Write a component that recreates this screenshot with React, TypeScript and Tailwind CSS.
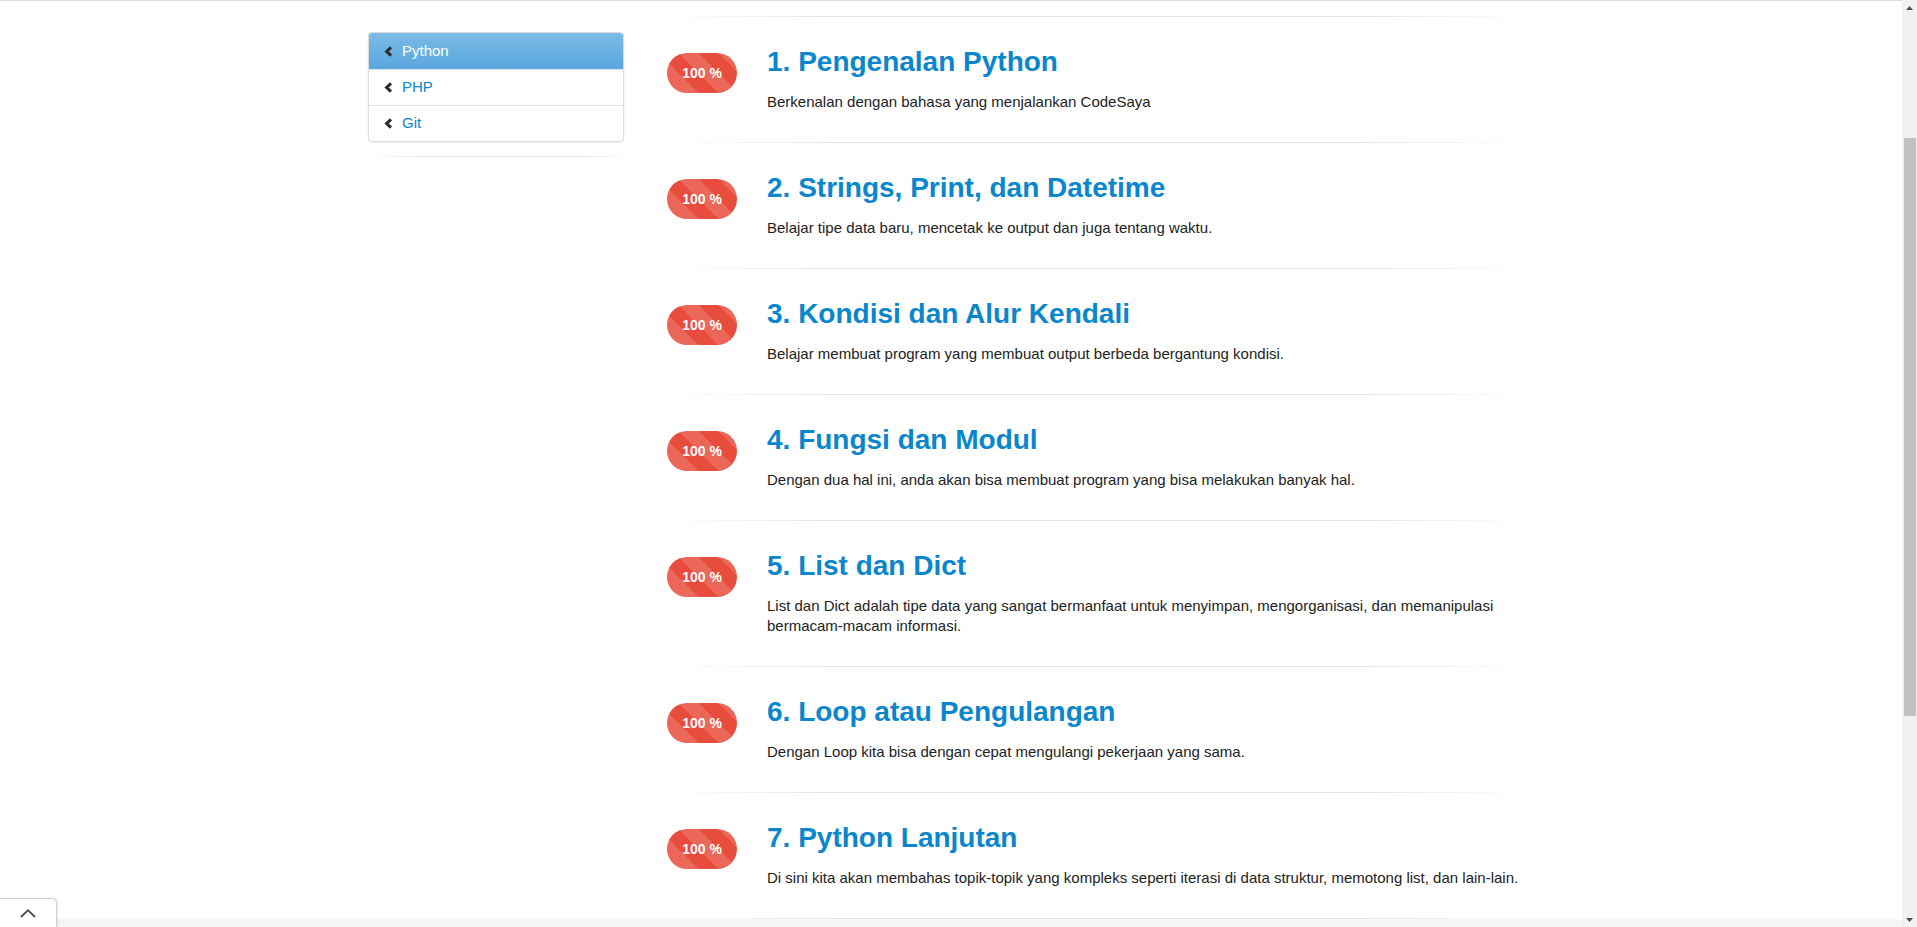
import React from "react";

const lessons = [
  { title: "1. Pengenalan Python", desc: "Berkenalan dengan bahasa yang menjalankan CodeSaya" },
  { title: "2. Strings, Print, dan Datetime", desc: "Belajar tipe data baru, mencetak ke output dan juga tentang waktu." },
  { title: "3. Kondisi dan Alur Kendali", desc: "Belajar membuat program yang membuat output berbeda bergantung kondisi." },
  { title: "4. Fungsi dan Modul", desc: "Dengan dua hal ini, anda akan bisa membuat program yang bisa melakukan banyak hal." },
  {
    title: "5. List dan Dict",
    desc: "List dan Dict adalah tipe data yang sangat bermanfaat untuk menyimpan, mengorganisasi, dan memanipulasi bermacam-macam informasi.",
  },
  { title: "6. Loop atau Pengulangan", desc: "Dengan Loop kita bisa dengan cepat mengulangi pekerjaan yang sama." },
  {
    title: "7. Python Lanjutan",
    desc: "Di sini kita akan membahas topik-topik yang kompleks seperti iterasi di data struktur, memotong list, dan lain-lain.",
  },
];

function Chevron() {
  return (
    <svg width="9" height="11" viewBox="0 0 9 11" className="shrink-0">
      <path d="M7 1.3 L2.6 5.5 L7 9.7" fill="none" stroke="#2a2a2a" strokeWidth="3" />
    </svg>
  );
}

function Separator() {
  return (
    <div className="h-px bg-[linear-gradient(to_right,rgba(0,0,0,0),rgba(0,0,0,0.1)_20%,rgba(0,0,0,0.1)_80%,rgba(0,0,0,0))]" />
  );
}

function Badge() {
  return (
    <div className="ml-[6px] mt-[11px] flex h-[40px] w-[70px] items-center justify-center rounded-full bg-[#e74c3c] bg-[linear-gradient(45deg,rgba(255,255,255,.15)_25%,transparent_25%,transparent_50%,rgba(255,255,255,.15)_50%,rgba(255,255,255,.15)_75%,transparent_75%,transparent)] bg-[length:40px_40px] bg-[position:12px_0] text-[14px] font-bold text-white">
      100 %
    </div>
  );
}

export default function App() {
  return (
    <div className="flex h-screen overflow-hidden bg-white font-['Liberation_Sans',Arial,sans-serif] text-[15px] text-[#222]">
      <div className="relative flex min-w-0 flex-1 flex-col">
        <div className="h-px bg-[#dcdcdc]" />
        <div className="min-h-0 flex-1 overflow-hidden">
          <div className="mx-auto flex w-[1166px]">
            {/* Sidebar */}
            <div className="w-[256px] shrink-0 pt-[31px]">
              <div className="overflow-hidden rounded-[4px] border border-[#dddddd] bg-white shadow-[0_1px_2px_rgba(0,0,0,0.08)]">
                <div className="flex h-[36px] items-center gap-[9px] bg-[linear-gradient(to_bottom,#7bbbe7,#59a7de)] pl-[15px] text-white">
                  <Chevron />
                  <span>Python</span>
                </div>
                <div className="flex h-[36px] items-center gap-[9px] border-t border-[#e3e3e3] pl-[15px] text-[#0a86cc]">
                  <Chevron />
                  <span>PHP</span>
                </div>
                <div className="flex h-[36px] items-center gap-[9px] border-t border-[#e3e3e3] pl-[15px] text-[#0a86cc]">
                  <Chevron />
                  <span>Git</span>
                </div>
              </div>
              <div className="ml-[2px] mt-[14px] w-[260px]">
                <Separator />
              </div>
            </div>

            {/* Lessons */}
            <div className="ml-[37px] w-[873px] shrink-0 pt-[15px]">
              <Separator />
              {lessons.map((l) => (
                <div key={l.title}>
                  <div className="flex pb-[30px] pt-[25px]">
                    <div className="w-[106px] shrink-0">
                      <Badge />
                    </div>
                    <div className="min-w-0 flex-1">
                      <h2 className="text-[28px] font-bold leading-[40px] text-[#0a86cc]">{l.title}</h2>
                      <p className="mt-[10px] leading-[20px] text-[#222]">{l.desc}</p>
                    </div>
                  </div>
                  <Separator />
                </div>
              ))}
            </div>
          </div>
        </div>
        <div className="h-[6px] bg-[#f6f6f6] shadow-[0_-1px_3px_rgba(0,0,0,0.08)]" />

        {/* bottom-left toggle tab */}
        <div className="absolute bottom-0 left-0 flex h-[29px] w-[57px] items-center justify-center rounded-tr-[5px] border-r border-t border-[#d0d0d0] bg-white shadow-[1px_0_3px_rgba(0,0,0,0.1)]">
          <svg width="16" height="9" viewBox="0 0 16 9">
            <path d="M1 8 L8 1.2 L15 8" fill="none" stroke="#4a4a4a" strokeWidth="1.8" />
          </svg>
        </div>
      </div>

      {/* scrollbar */}
      <div className="flex w-[15px] shrink-0 flex-col bg-[#f1f1f1]">
        <div className="flex h-[15px] items-center justify-center">
          <svg width="7" height="4" viewBox="0 0 7 4">
            <path d="M0 4 L3.5 0 L7 4 Z" fill="#505050" />
          </svg>
        </div>
        <div className="flex-1 pt-[123px] pb-[196px]">
          <div className="ml-[2px] mr-[1px] h-full bg-[#c1c1c1]" />
        </div>
        <div className="flex h-[15px] items-center justify-center">
          <svg width="7" height="4" viewBox="0 0 7 4">
            <path d="M0 0 L7 0 L3.5 4 Z" fill="#505050" />
          </svg>
        </div>
      </div>
    </div>
  );
}
